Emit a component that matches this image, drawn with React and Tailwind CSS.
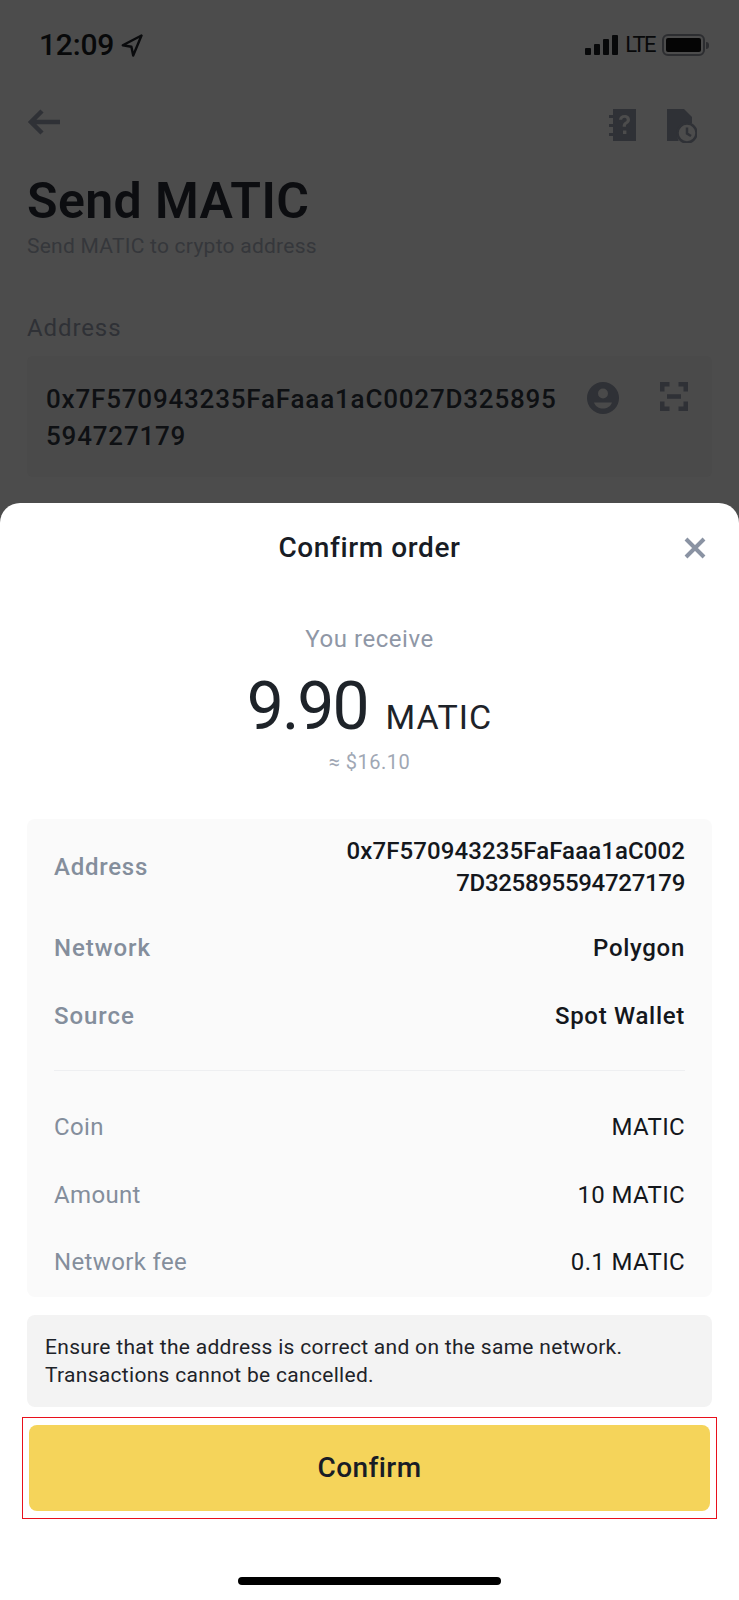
import React from 'react';

const FONT = "font-['Roboto',sans-serif]";

const LocationArrow = () => (
  <svg width="22" height="23" viewBox="0 0 22 23" fill="none" stroke="#0a0b0d" strokeWidth="2.4" strokeLinejoin="round">
    <path d="M20.5 1.5 1.8 11.2l8.6 1.6 1.8 8.7z" />
  </svg>
);

const SignalBars = () => (
  <div className="flex items-end gap-[3px] h-[20px]">
    <div className="w-[6px] h-[7px] rounded-[1px] bg-[#08090a]" />
    <div className="w-[6px] h-[11px] rounded-[1px] bg-[#08090a]" />
    <div className="w-[6px] h-[16px] rounded-[1px] bg-[#08090a]" />
    <div className="w-[6px] h-[20px] rounded-[1px] bg-[#08090a]" />
  </div>
);

const Battery = () => (
  <div className="flex items-center gap-[1px]">
    <div className="w-[43px] h-[22px] rounded-[6px] border-2 border-[#2c2d30] p-[2px]">
      <div className="w-full h-full rounded-[2px] bg-[#050505]" />
    </div>
    <div className="w-[3px] h-[7px] rounded-r-full bg-[#2c2d30]" />
  </div>
);

const BackArrow = () => (
  <svg width="33" height="26" viewBox="0 0 33 26" fill="none" stroke="#2f3136" strokeWidth="4.5">
    <path d="M33 13H4M15 2 4 13l11 11" />
  </svg>
);

const HelpBook = () => (
  <svg width="28" height="33" viewBox="0 0 28 33">
    <path fill="#2f3136" fillRule="evenodd" d="M5 0h23v32H5v-5H1v-3h4v-6H1v-3h4V9H1V6h4zM16.6 6c-3.2 0-5.4 1.800-5.600 4.800h3.200c.1-1.200 1-2 2.300-2 1.300 0 2.200.8 2.200 1.900 0 1-.5 1.500-1.700 2.300-1.600 1-2.300 2.100-2.300 4v.8h3.200V17c0-1 .4-1.500 1.700-2.300 1.500-1 2.400-2.200 2.400-4C22 7.900 19.800 6 16.600 6zM15 21.500V25h3.400v-3.500z" />
  </svg>
);

const HistoryDoc = () => (
  <svg width="30" height="34" viewBox="0 0 30 34">
    <path fill="#2f3136" d="M0 0h17l8 8v6.500C16 13 9.500 20 10.500 28c.2 1.500.6 3 1.300 4H0z" />
    <circle cx="20" cy="24" r="9.500" fill="none" stroke="#2f3136" strokeWidth="2.500" />
    <path fill="none" stroke="#2f3136" strokeWidth="2.500" d="M20 18.500V24.500l4 2.500" />
  </svg>
);

const PersonCircle = () => (
  <svg width="32" height="32" viewBox="0 0 32 32">
    <path fill="#2f3136" fillRule="evenodd" d="M16 0a16 16 0 1 1 0 32 16 16 0 0 1 0-32zm0 6.500a5 5 0 1 0 0 10 5 5 0 0 0 0-10zM7 20.500c1.500 4 5 6 9 6s7.500-2 9-6z" />
  </svg>
);

const ScanIcon = () => (
  <svg width="28" height="29" viewBox="0 0 28 29" fill="none" stroke="#2f3136" strokeWidth="4.500">
    <path d="M9.500 2.250H2.250V9.500M18.500 2.250h7.250V9.500M9.500 26.750H2.250V19.500M18.500 26.750h7.250V19.500" />
    <path d="M7 14.500h14" />
  </svg>
);

const CloseIcon = () => (
  <svg width="22" height="22" viewBox="0 0 22 22" fill="none" stroke="#8a93a3" strokeWidth="4">
    <path d="M2 2l18 18M20 2 2 20" />
  </svg>
);

const topRows = [
  { label: 'Network', value: 'Polygon' },
  { label: 'Source', value: 'Spot Wallet' },
];

const bottomRows = [
  { label: 'Coin', value: 'MATIC' },
  { label: 'Amount', value: '10 MATIC' },
  { label: 'Network fee', value: '0.1 MATIC' },
];

export default function App() {
  return (
    <div className={`w-[739px] h-[1600px] flex flex-col bg-[#4c4c4c] overflow-hidden ${FONT}`}>
      {/* dimmed page behind the sheet */}
      <div className="h-[503px] shrink-0 px-[27px]">
        <div className="flex items-center justify-between pt-[30px] pl-[12px] pr-[3px]">
          <div className="flex items-center gap-[7px]">
            <span className="text-[30px] leading-[30px] font-medium tracking-[-0.2px] text-[#08090a]">12:09</span>
            <LocationArrow />
          </div>
          <div className="flex items-center gap-[7px]">
            <SignalBars />
            <span className="text-[22px] leading-[24px] tracking-[-1.6px] text-[#08090a]">LTE</span>
            <Battery />
          </div>
        </div>

        <div className="flex items-start justify-between mt-[49px] pr-[15px]">
          <BackArrow />
          <div className="flex gap-[31px]">
            <HelpBook />
            <HistoryDoc />
          </div>
        </div>

        <h1 className="mt-[30px] text-[50px] leading-[56px] font-semibold tracking-[0.4px] text-[#0c0d10]">Send MATIC</h1>
        <p className="mt-[3px] text-[21px] leading-[28px] tracking-[0.25px] text-[#35373b]">Send MATIC to crypto address</p>
        <p className="mt-[52px] text-[24px] leading-[32px] tracking-[0.9px] text-[#2f3136]">Address</p>

        <div className="mt-[12px] h-[121px] rounded-[6px] bg-[#4a4a4a] pl-[19px] pr-[24px] pt-[25px] flex justify-between">
          <div className="text-[26px] leading-[36.5px] font-medium tracking-[0.8px] text-[#0e1013]">
            <div>0x7F570943235FaFaaa1aC0027D325895</div>
            <div>594727179</div>
          </div>
          <div className="flex items-start gap-[41px] pt-[1px]">
            <PersonCircle />
            <ScanIcon />
          </div>
        </div>
      </div>

      {/* confirm sheet */}
      <div className="flex-1 bg-white rounded-t-[20px] flex flex-col">
        <div className="relative h-[90px] pt-[29px] text-center text-[28px] leading-[32px] font-medium tracking-[0.6px] text-[#181c25]">
          Confirm order
          <div className="absolute right-[33px] top-[34px]">
            <CloseIcon />
          </div>
        </div>

        <div className="mt-[30px] text-center text-[24px] leading-[32px] tracking-[0.55px] text-[#8f97a6]">You receive</div>
        <div className="mt-[15px] h-[74px] flex items-baseline justify-center gap-[18px] text-[#1e2329]">
          <span className="text-[66px] leading-[74px] tracking-[-2px]">9.90</span>
          <span className="text-[34px] leading-[74px] tracking-[1px]">MATIC</span>
        </div>
        <div className="mt-[4px] text-center text-[20px] leading-[28px] tracking-[0.5px] text-[#a0a7b4]">≈ $16.10</div>

        <div className="mt-[43px] mx-[27px] h-[478px] rounded-[8px] bg-[#fafafa] px-[27px] pt-[16px]">
          <div className="flex items-center justify-between">
            <span className="text-[24px] font-medium tracking-[0.75px] text-[#848e9c]">Address</span>
            <div className="text-right text-[24px] leading-[32px] font-medium text-[#14171c]">
              <div className="tracking-[0.1px]">0x7F570943235FaFaaa1aC002</div>
              <div className="tracking-[-0.3px]">7D325895594727179</div>
            </div>
          </div>
          <div className="mt-[31px] flex flex-col gap-[32px]">
            {topRows.map((row) => (
              <div key={row.label} className="flex justify-between text-[24px] leading-[36px] font-medium">
                <span className="tracking-[0.95px] text-[#848e9c]">{row.label}</span>
                <span className="tracking-[0.7px] text-[#14171c]">{row.value}</span>
              </div>
            ))}
          </div>
          <div className="mt-[36px] h-px bg-[#eeeff1]" />
          <div className="mt-[38px] flex flex-col gap-[31.5px]">
            {bottomRows.map((row) => (
              <div key={row.label} className="flex justify-between text-[24px] leading-[36px] tracking-[0.35px]">
                <span className="text-[#848e9c]">{row.label}</span>
                <span className="text-[#14171c]">{row.value}</span>
              </div>
            ))}
          </div>
        </div>

        <div className="mt-[18px] mx-[27px] h-[92px] rounded-[8px] bg-[#f3f3f3] px-[18px] pt-[18px] text-[21px] leading-[28px] tracking-[0.3px] text-[#1e2329]">
          <div>Ensure that the address is correct and on the same network.</div>
          <div>Transactions cannot be cancelled.</div>
        </div>

        <div className="mt-[10px] mx-[22px] h-[102px] border border-[#e8101c] px-[6px] py-[7px]">
          <button className="w-full h-full rounded-[8px] bg-[#f5d45a] text-[28px] font-medium tracking-[0.4px] text-[#181c25]">Confirm</button>
        </div>

        <div className="mt-[58px] mx-auto w-[263px] h-[8px] rounded-full bg-black" />
      </div>
    </div>
  );
}
